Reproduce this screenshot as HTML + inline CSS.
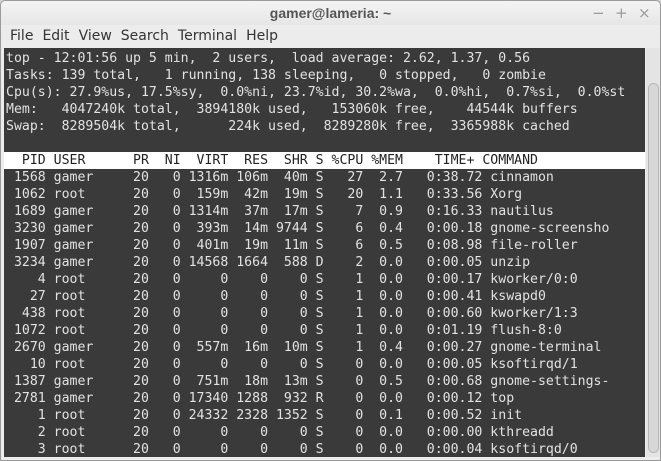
<!DOCTYPE html>
<html><head><meta charset="utf-8"><style>
*{margin:0;padding:0;box-sizing:border-box}
html,body{width:661px;height:461px;overflow:hidden;background:#d6d6d6}
.win{position:absolute;left:0;top:0;width:661px;height:461px;background:#ececec;border:1px solid #9a9a9a;border-radius:5px 5px 0 0}
.title{position:absolute;left:0;top:0;width:659px;height:24px;background:linear-gradient(#f4f4f4,#e6e6e6);border-radius:5px 5px 0 0;font:bold 14px "Liberation Sans","DejaVu Sans",sans-serif;color:#555;text-align:center;line-height:24px}
.ctl{position:absolute;top:3px;font:15px "DejaVu Sans",sans-serif;color:#9a9a9a}
.menu{position:absolute;left:9px;top:24px;height:22px;font:14px "DejaVu Sans","Liberation Sans",sans-serif;color:#333;line-height:22px;word-spacing:2px}
.menu span{margin-right:9px}
.term{position:absolute;left:3px;top:47px;width:641px;height:409px;background:#3a3a3a;overflow:hidden}
pre{position:absolute;left:2px;top:2px;font:13.2px/17px "DejaVu Sans Mono","Liberation Mono",monospace;color:#e2e2e2;white-space:pre}
.hd{background:#fff;color:#222;display:inline-block;width:641px;margin-left:-2px;padding-left:2px}
.sb{position:absolute;left:645px;top:47px;width:14px;height:409px;background:#e4e4e4}
.th{position:absolute;left:2px;top:35px;width:11px;height:370px;background:#d8d8d8;border:1px solid #b8b8b8;border-radius:6px}
</style></head><body>
<div class="win">
<div class="title">gamer@lameria: ~</div>
<div class="ctl" style="left:591px">−</div>
<div class="ctl" style="left:614px">+</div>
<div class="ctl" style="left:637px">×</div>
<div class="menu"><span>File</span><span>Edit</span><span>View</span><span>Search</span><span>Terminal</span><span>Help</span></div>
<div class="term"><pre>top - 12:01:56 up 5 min,  2 users,  load average: 2.62, 1.37, 0.56
Tasks: 139 total,   1 running, 138 sleeping,   0 stopped,   0 zombie
Cpu(s): 27.9%us, 17.5%sy,  0.0%ni, 23.7%id, 30.2%wa,  0.0%hi,  0.7%si,  0.0%st
Mem:   4047240k total,  3894180k used,   153060k free,    44544k buffers
Swap:  8289504k total,      224k used,  8289280k free,  3365988k cached

<span class="hd">  PID USER      PR  NI  VIRT  RES  SHR S %CPU %MEM    TIME+ COMMAND           </span>
 1568 gamer     20   0 1316m 106m  40m S   27  2.7   0:38.72 cinnamon
 1062 root      20   0  159m  42m  19m S   20  1.1   0:33.56 Xorg
 1689 gamer     20   0 1314m  37m  17m S    7  0.9   0:16.33 nautilus
 3230 gamer     20   0  393m  14m 9744 S    6  0.4   0:00.18 gnome-screensho
 1907 gamer     20   0  401m  19m  11m S    6  0.5   0:08.98 file-roller
 3234 gamer     20   0 14568 1664  588 D    2  0.0   0:00.05 unzip
    4 root      20   0     0    0    0 S    1  0.0   0:00.17 kworker/0:0
   27 root      20   0     0    0    0 S    1  0.0   0:00.41 kswapd0
  438 root      20   0     0    0    0 S    1  0.0   0:00.60 kworker/1:3
 1072 root      20   0     0    0    0 S    1  0.0   0:01.19 flush-8:0
 2670 gamer     20   0  557m  16m  10m S    1  0.4   0:00.27 gnome-terminal
   10 root      20   0     0    0    0 S    0  0.0   0:00.05 ksoftirqd/1
 1387 gamer     20   0  751m  18m  13m S    0  0.5   0:00.68 gnome-settings-
 2781 gamer     20   0 17340 1288  932 R    0  0.0   0:00.12 top
    1 root      20   0 24332 2328 1352 S    0  0.1   0:00.52 init
    2 root      20   0     0    0    0 S    0  0.0   0:00.00 kthreadd
    3 root      20   0     0    0    0 S    0  0.0   0:00.04 ksoftirqd/0</pre></div>
<div class="sb"><div class="th"></div></div>
</div>
</body></html>
